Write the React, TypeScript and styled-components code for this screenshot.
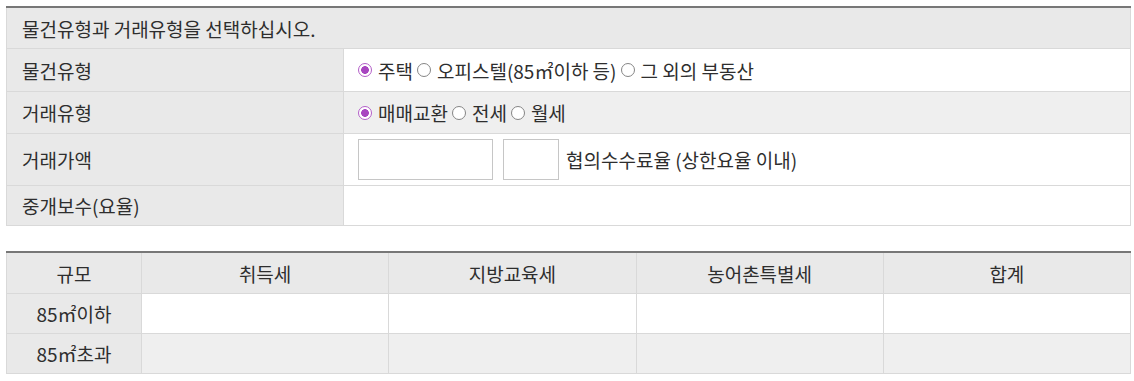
import styled, { createGlobalStyle } from "styled-components";

const GlobalStyle = createGlobalStyle`
  body {
    margin: 0;
    background: #fff;
    font-family: "Noto Sans CJK KR", "Noto Sans", sans-serif;
    color: #2e2e2e;
  }
`;

const Page = styled.div`
  padding: 6px 3px 0 6px;
`;

const FormTable = styled.table`
  width: 1125px;
  border-collapse: collapse;
  border-top: 2px solid #777;
  font-size: 19px;
  margin-bottom: 25px;
`;

const Caption = styled.th`
  background: #e9e9e9;
  text-align: left;
  font-weight: normal;
  padding: 0 15px;
  height: 40px;
  border: 1px solid #d9d9d9;
  border-top: none;
`;

const Row = styled.tr<{ $h: number; $shade?: boolean }>`
  height: ${(p) => p.$h}px;
  background: ${(p) => (p.$shade ? "#efefef" : "#fff")};
`;

const Label = styled.th`
  width: 306px;
  background: #e9e9e9;
  text-align: left;
  font-weight: normal;
  padding: 0 15px;
  border: 1px solid #d9d9d9;
`;

const Value = styled.td`
  padding: 0 14px;
  border: 1px solid #d9d9d9;
`;

const Options = styled.div`
  display: flex;
  align-items: center;
  gap: 4px;
`;

const Option = styled.label`
  display: inline-flex;
  align-items: center;
  gap: 6px;
`;

const Dot = styled.span<{ $on?: boolean }>`
  width: 14px;
  height: 14px;
  box-sizing: border-box;
  border-radius: 50%;
  border: 1px solid ${(p) => (p.$on ? "#b35ec8" : "#858585")};
  background: ${(p) =>
    p.$on ? "radial-gradient(circle, #a845c0 0 3.6px, #fff 4.1px)" : "#fff"};
`;

const Inputs = styled.div`
  display: flex;
  align-items: center;
  gap: 10px;
`;

const Box = styled.input<{ $w: number }>`
  width: ${(p) => p.$w}px;
  height: 41px;
  box-sizing: border-box;
  border: 1px solid #c6c6c6;
  margin: 0;
`;

const Hint = styled.span`
  margin-left: -3px;
`;

const TaxTable = styled.table`
  width: 1125px;
  border-collapse: collapse;
  border-top: 2px solid #777;
  font-size: 19px;
  table-layout: fixed;
`;

const Head = styled.th<{ $w?: number }>`
  ${(p) => (p.$w ? `width: ${p.$w}px;` : "")}
  height: 38px;
  background: #e9e9e9;
  font-weight: normal;
  text-align: center;
  border: 1px solid #d9d9d9;
  border-top: none;
`;

const Size = styled.th`
  background: #e9e9e9;
  font-weight: normal;
  text-align: center;
  border: 1px solid #d9d9d9;
`;

const Cell = styled.td`
  border: 1px solid #d9d9d9;
`;

function Radio({ on, text }: { on?: boolean; text: string }) {
  return (
    <Option>
      <Dot $on={on} />
      {text}
    </Option>
  );
}

export default function App() {
  return (
    <Page>
      <GlobalStyle />
      <FormTable>
        <thead>
          <tr>
            <Caption colSpan={2}>물건유형과 거래유형을 선택하십시오.</Caption>
          </tr>
        </thead>
        <tbody>
          <Row $h={43}>
            <Label>물건유형</Label>
            <Value>
              <Options>
                <Radio on text="주택" />
                <Radio text="오피스텔(85㎡이하 등)" />
                <Radio text="그 외의 부동산" />
              </Options>
            </Value>
          </Row>
          <Row $h={42} $shade>
            <Label>거래유형</Label>
            <Value>
              <Options>
                <Radio on text="매매교환" />
                <Radio text="전세" />
                <Radio text="월세" />
              </Options>
            </Value>
          </Row>
          <Row $h={52}>
            <Label>거래가액</Label>
            <Value>
              <Inputs>
                <Box $w={135} />
                <Box $w={56} />
                <Hint>협의수수료율 (상한요율 이내)</Hint>
              </Inputs>
            </Value>
          </Row>
          <Row $h={40}>
            <Label>중개보수(요율)</Label>
            <Value />
          </Row>
        </tbody>
      </FormTable>
      <TaxTable>
        <thead>
          <tr>
            <Head $w={132}>규모</Head>
            <Head>취득세</Head>
            <Head>지방교육세</Head>
            <Head>농어촌특별세</Head>
            <Head>합계</Head>
          </tr>
        </thead>
        <tbody>
          <Row $h={40}>
            <Size>85㎡이하</Size>
            <Cell />
            <Cell />
            <Cell />
            <Cell />
          </Row>
          <Row $h={40} $shade>
            <Size>85㎡초과</Size>
            <Cell />
            <Cell />
            <Cell />
            <Cell />
          </Row>
        </tbody>
      </TaxTable>
    </Page>
  );
}
